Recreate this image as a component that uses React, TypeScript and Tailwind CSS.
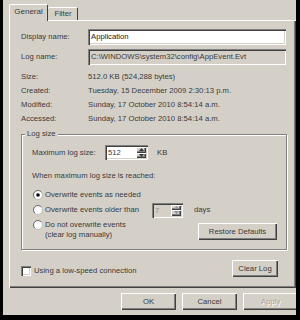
const raised =
  "shadow-[inset_1px_1px_0_#fff,inset_-1px_-1px_0_#404040,inset_-2px_-2px_0_#808080]";
const sunken =
  "shadow-[inset_1px_1px_0_#808080,inset_2px_2px_0_#404040,inset_-1px_-1px_0_#fff,inset_-2px_-2px_0_#d4d0c8]";

const Radio = ({ checked = false }: { checked?: boolean }) => (
  <svg width="10" height="10" viewBox="0 0 10 10" className="shrink-0">
    <circle cx="5" cy="5" r="4.5" fill="#fff" stroke="#b8b8b8" />
    <path d="M1.8 8.2 A4.5 4.5 0 0 1 8.2 1.8" fill="none" stroke="#707070" />
    {checked && <circle cx="5" cy="5" r="1.8" fill="#000" />}
  </svg>
);

const Arrow = ({ up, color }: { up: boolean; color: string }) => (
  <svg width="5" height="3" viewBox="0 0 5 3">
    <path d={up ? "M2.5 0 L5 3 L0 3 Z" : "M0 0 L5 0 L2.5 3 Z"} fill={color} />
  </svg>
);

const Spin = ({
  value,
  width,
  disabled = false,
}: {
  value: string;
  width: string;
  disabled?: boolean;
}) => (
  <div
    className={`flex h-[15px] ${width} ${sunken} ${disabled ? "bg-[#d4d0c8] text-[#909090]" : "bg-white"}`}
  >
    <span className="flex-1 pl-[3px] leading-[15px]">{value}</span>
    <div className="my-[2px] mr-[2px] flex w-[10px] flex-col">
      <div className={`flex flex-1 items-center justify-center bg-[#d4d0c8] ${raised}`}>
        <Arrow up color={disabled ? "#909090" : "#333"} />
      </div>
      <div className={`flex flex-1 items-center justify-center bg-[#d4d0c8] ${raised}`}>
        <Arrow up={false} color={disabled ? "#909090" : "#333"} />
      </div>
    </div>
  </div>
);

const Btn = ({
  label,
  w,
  disabled = false,
}: {
  label: string;
  w: string;
  disabled?: boolean;
}) => (
  <div
    className={`flex h-[17px] shrink-0 items-center justify-center bg-[#d4d0c8] ${w} ${raised} ${
      disabled ? "text-[#a0a0a0] [text-shadow:1px_1px_0_#fff]" : ""
    }`}
  >
    {label}
  </div>
);

const InfoRow = ({ label, value }: { label: string; value: string }) => (
  <div className="flex h-[14px] items-center">
    <span className="w-[67px] shrink-0">{label}</span>
    <span className="whitespace-nowrap">{value}</span>
  </div>
);

export default function App() {
  return (
    <div className="h-[320px] w-[300px] bg-black pb-[5px] pl-[3px] pr-[4px] font-['Liberation_Sans',Arial,sans-serif] text-[7.7px] text-[#3a3a3a]">
      <div className="flex h-full flex-col overflow-hidden bg-[#d4d0c8] pl-[6px] pt-[4px]">
        {/* tabs */}
        <div className="relative z-10 mb-[-1px] flex h-[17px] items-end">
          <div className="flex h-[17px] w-[39px] items-center justify-center rounded-t-[2px] border-l border-r border-t border-l-white border-r-[#404040] border-t-white bg-[#d4d0c8] pb-[2px] text-[8px]">
            General
          </div>
          <div className="mb-[1px] flex h-[13px] w-[30px] items-center justify-center rounded-t-[2px] border-r border-t border-r-[#404040] border-t-white pl-[1px]">
            Filter
          </div>
        </div>

        {/* panel */}
        <div className={`flex h-[268px] w-[287px] shrink-0 flex-col pl-[12px] ${raised}`}>
          <div className="mt-[9px] flex h-[16px] items-center">
            <span className="w-[67px] shrink-0">Display name:</span>
            <div className={`h-[16px] w-[198px] bg-white pl-[3px] leading-[16px] text-[#202020] ${sunken}`}>
              Application
            </div>
          </div>
          <div className="mt-[4px] flex h-[16px] items-center">
            <span className="w-[67px] shrink-0">Log name:</span>
            <div className={`h-[16px] w-[198px] whitespace-nowrap pl-[3px] leading-[16px] ${sunken}`}>
              C:\WINDOWS\system32\config\AppEvent.Evt
            </div>
          </div>

          <div className="mt-[5px]">
            <InfoRow label="Size:" value="512.0 KB (524,288 bytes)" />
            <InfoRow label="Created:" value="Tuesday, 15 December 2009 2:30:13 p.m." />
            <InfoRow label="Modified:" value="Sunday, 17 October 2010 8:54:14 a.m." />
            <InfoRow label="Accessed:" value="Sunday, 17 October 2010 8:54:14 a.m." />
          </div>

          {/* log size group */}
          <div className="relative mt-[8px] flex h-[116px] w-[266px] flex-col border border-[#808080] pl-[10px] pr-[9px] shadow-[1px_1px_0_#fff,inset_1px_1px_0_#fff]">
            <span className="absolute left-[3px] top-[-6px] bg-[#d4d0c8] px-[2px] leading-[10px]">
              Log size
            </span>
            <div className="mt-[10px] flex h-[15px] items-center">
              <span className="w-[73px] shrink-0">Maximum log size:</span>
              <Spin value="512" width="w-[43px]" />
              <span className="ml-[9px]">KB</span>
            </div>
            <div className="mt-[10px] flex h-[12px] items-center">When maximum log size is reached:</div>
            <div className="mt-[7px] flex h-[12px] items-center gap-[2px] pl-[1px]">
              <Radio checked />
              <span>Overwrite events as needed</span>
            </div>
            <div className="mt-[2px] flex h-[14px] items-center">
              <div className="flex w-[120px] shrink-0 items-center gap-[2px] pl-[1px]">
                <Radio />
                <span>Overwrite events older than</span>
              </div>
              <Spin value="7" width="w-[31px]" disabled />
              <span className="ml-[11px]">days</span>
            </div>
            <div className="mt-[3px] flex items-start">
              <div className="flex items-start gap-[2px] pl-[1px]">
                <Radio />
                <span className="leading-[10px]">
                  Do not overwrite events
                  <br />
                  (clear log manually)
                </span>
              </div>
              <div className="ml-auto mt-[3px]">
                <Btn label="Restore Defaults" w="w-[79px]" />
              </div>
            </div>
          </div>

          <div className="mt-[10px] flex h-[17px] w-[257px] items-end">
            <div className="flex h-[12px] items-center gap-[3px]">
              <span className={`h-[10px] w-[10px] shrink-0 bg-white ${sunken}`} />
              <span>Using a low-speed connection</span>
            </div>
            <div className="ml-auto">
              <Btn label="Clear Log" w="w-[46px]" />
            </div>
          </div>
        </div>

        {/* dialog buttons */}
        <div className="ml-[112px] mt-[5px] flex gap-[6px]">
          <Btn label="OK" w="w-[55px]" />
          <Btn label="Cancel" w="w-[55px]" />
          <Btn label="Apply" w="w-[55px]" disabled />
        </div>
      </div>
    </div>
  );
}
